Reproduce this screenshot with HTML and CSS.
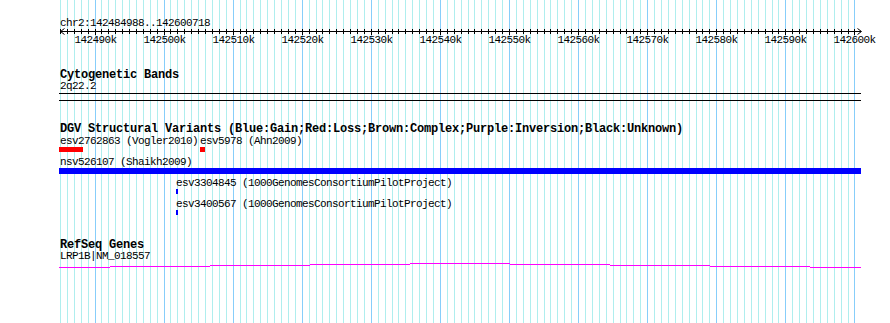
FILE: index.html
```html
<!DOCTYPE html>
<html lang="en">
<head>
  <meta charset="UTF-8" />
  <meta name="viewport" content="width=device-width, initial-scale=1" />
  <title>chr2:142484988..142600718</title>
  <link rel="stylesheet" href="styles.css">
</head>
<body>
  <div class="panel">
    <!-- Grid lines behind the tracks (filled in by the script) -->
    <svg class="grid" id="grid" width="890" height="323"></svg>

    <!-- Ruler -->
    <div class="track track-ruler">
      <div class="label">chr2:142484988..142600718</div>
      <svg class="ruler" id="ruler" width="890" height="19"></svg>
    </div>

    <!-- Cytogenetic Bands -->
    <div class="track track-cyto">
      <div class="title">Cytogenetic Bands</div>
      <div class="label">2q22.2</div>
      <div class="band"></div>
    </div>

    <!-- DGV Structural Variants -->
    <div class="track track-dgv">
      <div class="title">DGV Structural Variants (Blue:Gain;Red:Loss;Brown:Complex;Purple:Inversion;Black:Unknown)</div>
      <div class="row">
        <div class="feature" style="left:59px">
          <div class="label label-first">esv2762863 (Vogler2010)</div>
          <div class="bar loss" style="width:24px"></div>
        </div>
        <div class="feature" style="left:200px">
          <div class="label">esv5978 (Ahn2009)</div>
          <div class="bar loss" style="width:5px"></div>
        </div>
      </div>
      <div class="row">
        <div class="feature" style="left:59px">
          <div class="label label-first">nsv526107 (Shaikh2009)</div>
          <div class="bar gain bar-thick" style="width:802px"></div>
        </div>
      </div>
      <div class="row">
        <div class="feature" style="left:176px">
          <div class="label">esv3304845 (1000GenomesConsortiumPilotProject)</div>
          <div class="bar gain" style="width:2px"></div>
        </div>
      </div>
      <div class="row">
        <div class="feature" style="left:176px">
          <div class="label">esv3400567 (1000GenomesConsortiumPilotProject)</div>
          <div class="bar gain" style="width:2px"></div>
        </div>
      </div>
    </div>

    <!-- RefSeq Genes -->
    <div class="track track-refseq">
      <div class="title">RefSeq Genes</div>
      <div class="label">LRP1B|NM_018557</div>
      <svg class="gene" width="890" height="8">
        <rect x="59" y="5" width="51" height="1" />
        <rect x="110" y="4" width="100" height="1" />
        <rect x="210" y="3" width="100" height="1" />
        <rect x="310" y="2" width="100" height="1" />
        <rect x="410" y="1" width="100" height="1" />
        <rect x="510" y="2" width="100" height="1" />
        <rect x="610" y="3" width="100" height="1" />
        <rect x="710" y="4" width="100" height="1" />
        <rect x="810" y="5" width="51" height="1" />
      </svg>
    </div>
  </div>

  <script>
    document.addEventListener('DOMContentLoaded', function() {
      const NS = 'http://www.w3.org/2000/svg';
      const grid = document.getElementById('grid');
      const ruler = document.getElementById('ruler');
      const firstKb = 142485;
      const lastKb = 142600;

      // screen x of a position given in kb
      function px(kb) {
        return Math.floor(95 + (kb - 142490) * 6.909) + 0.5;
      }

      function add(parent, tag, attrs, text) {
        const el = document.createElementNS(NS, tag);
        for (const key in attrs) el.setAttribute(key, attrs[key]);
        if (text) el.textContent = text;
        parent.appendChild(el);
        return el;
      }

      // Grid lines: one every kb, darker every 10 kb
      for (let kb = firstKb; kb <= lastKb; kb++) {
        const x = px(kb);
        add(grid, 'line', {
          x1: x, x2: x, y1: 0, y2: 323,
          class: kb % 10 === 0 ? 'major' : 'minor'
        });
      }

      // Ruler line with arrows at both ends
      add(ruler, 'line', { x1: 60, x2: 861, y1: 2.5, y2: 2.5 });
      add(ruler, 'path', { d: 'M64.5 -0.5 L60.5 2.5 L64.5 5.5' });
      add(ruler, 'path', { d: 'M857.5 -0.5 L861.5 2.5 L857.5 5.5' });

      // Ticks and labels
      for (let kb = firstKb; kb <= lastKb; kb++) {
        const x = px(kb);
        const major = kb % 10 === 0;
        add(ruler, 'line', { x1: x, x2: x, y1: 0, y2: major ? 6 : 5 });
        if (major) {
          add(ruler, 'text', { x: x, y: 14, class: 'tick-label' }, kb + 'k');
        }
      }
    });
  </script>
</body>
</html>
```

FILE: styles.css
```css
:root {
  --grid-minor: #afeeee;
  --grid-major: #87cefa;
  --gain: #0000ff;
  --loss: #ff0000;
  --gene: #ff00ff;
  --text: #000;
}

html, body {
  margin: 0;
  background: #fff;
}

body {
  font-family: 'Liberation Mono', 'DejaVu Sans Mono', monospace;
  color: var(--text);
}

.panel {
  position: relative;
  width: 890px;
  height: 323px;
  overflow: hidden;
}

/* Grid sits behind everything */
.grid {
  position: absolute;
  left: 0;
  top: 0;
}

.grid line {
  stroke-width: 1;
}

.grid .minor {
  stroke: var(--grid-minor);
}

.grid .major {
  stroke: var(--grid-major);
}

.track {
  position: relative;
}

/* Text */
.label {
  padding-left: 60px;
  font-size: 11px;
  line-height: 11px;
  height: 11px;
  letter-spacing: -0.6px;
  white-space: nowrap;
}

.title {
  padding-left: 60px;
  font-size: 12px;
  font-weight: bold;
  line-height: 12px;
  height: 12px;
  letter-spacing: -0.2px;
  white-space: nowrap;
}

/* Ruler */
.track-ruler {
  padding-top: 18px;
}

.ruler {
  display: block;
  overflow: visible;
}

.ruler line,
.ruler path {
  stroke: var(--text);
  stroke-width: 1;
  fill: none;
}

.ruler .tick-label {
  font-family: 'Liberation Mono', 'DejaVu Sans Mono', monospace;
  font-size: 11px;
  letter-spacing: -0.6px;
  text-anchor: middle;
  fill: var(--text);
}

/* Cytogenetic band: an empty outlined box */
.track-cyto {
  margin-top: 21px;
}

.band {
  margin: 1px 0 0 59px;
  width: 802px;
  height: 6px;
  border-top: 1px solid var(--text);
  border-bottom: 1px solid var(--text);
}

/* DGV */
.track-dgv {
  margin-top: 22px;
}

.row {
  position: relative;
  height: 21px;
}

.feature {
  position: absolute;
  top: 0;
  display: flex;
  flex-direction: column;
  padding-top: 1px;
}

.feature .label {
  padding-left: 0;
}

.feature .label-first {
  padding-left: 1px;
}

.bar {
  height: 5px;
}

.bar-thick {
  height: 6px;
}

.bar.gain {
  background: var(--gain);
}

.bar.loss {
  background: var(--loss);
}

/* RefSeq */
.track-refseq {
  margin-top: 20px;
}

.gene {
  display: block;
}

.gene rect {
  fill: var(--gene);
}
```
